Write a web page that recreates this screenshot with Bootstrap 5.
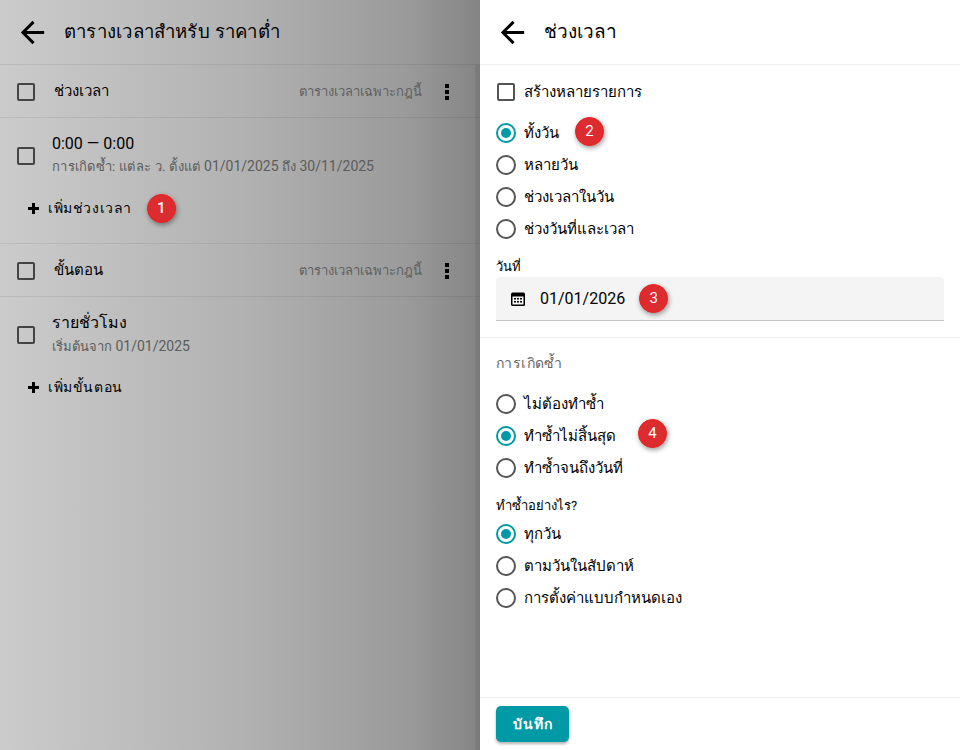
<!DOCTYPE html>
<html lang="th">
<head>
    <meta charset="UTF-8">
    <meta name="viewport" content="width=device-width, initial-scale=1.0">
    <title>ช่วงเวลา</title>
    <link href="https://cdn.jsdelivr.net/npm/bootstrap@5.3.0/dist/css/bootstrap.min.css" rel="stylesheet">
    <style>
        html, body { height: 100%; }
        body {
            font-family: Roboto, "Noto Sans", "Liberation Sans", sans-serif;
            font-size: 14px;
            color: #000;
            overflow: hidden;
        }
        .page-wrap { width: 960px; height: 750px; }

        /* left side, dimmed behind the drawer */
        .back-panel {
            width: 480px;
            background: linear-gradient(90deg, #cbcbcb 0%, #b2b2b2 50%, #9a9a9a 85%, #848484 100%);
            position: relative;
        }
        .back-panel::after {
            content: "";
            position: absolute;
            top: 65px;
            right: 0;
            bottom: 0;
            width: 5px;
            background: rgba(0, 0, 0, 0.07);
        }
        .top-bar { height: 65px; padding-left: 15px; gap: 14px; }
        .back-panel .top-bar { border-bottom: 1px solid rgba(0, 0, 0, 0.07); }
        .drawer .top-bar { border-bottom: 1px solid #eee; }
        .top-title { font-size: 19px; font-weight: 500; margin: 0; }
        .back-panel .top-title { font-size: 18.6px; letter-spacing: 0.22px; }

        .group-row { height: 53px; padding: 1px 30px 0 17px; border-bottom: 1px solid rgba(0, 0, 0, 0.07); }
        .group-name { font-size: 15px; font-weight: 500; margin-left: 19px; }
        .group-hint { font-size: 13px; color: #5f5f5f; margin-left: auto; margin-right: 22px; }
        .entry-row { padding: 15px 17px 0; gap: 17px; }
        .entry-title { font-size: 16px; line-height: 22px; }
        .entry-second .entry-title { font-weight: 500; }
        .entry-sub { font-size: 14px; line-height: 22px; color: #5c5c5c; }
        .entry-second .entry-sub { margin-top: 1px; }
        .entry-sub .th-part { font-size: 13px; }
        .entry-sub .th-wide { letter-spacing: 0.3px; }
        .add-link { font-size: 14px; font-weight: 500; letter-spacing: 0.6px; padding-left: 28px; gap: 9px; }
        .add-first { margin-top: 16px; height: 28px; }
        .add-second { margin-top: 15px; height: 28px; }
        .block-end { height: 22px; border-bottom: 1px solid rgba(0, 0, 0, 0.07); }

        .box-icon {
            width: 18px;
            height: 18px;
            border: 2px solid #444;
            border-radius: 2px;
            flex-shrink: 0;
        }
        .drawer .box-icon { border-color: #555; }
        .dot-icon {
            width: 20px;
            height: 20px;
            border: 2px solid #555;
            border-radius: 50%;
            flex-shrink: 0;
        }
        .dot-icon.picked { border-color: #009aa6; padding: 3px; }
        .dot-icon.picked::before {
            content: "";
            display: block;
            width: 10px;
            height: 10px;
            border-radius: 50%;
            background: #009aa6;
        }

        .num-pin {
            width: 29px;
            height: 29px;
            border-radius: 50%;
            background: #dc2c30;
            border: 1.5px solid #f01c1c;
            color: #fff;
            font-size: 15px;
            box-shadow: 1px 2px 5px rgba(0, 0, 0, 0.4);
        }
        .pin-near { margin-left: 6px; }
        .pin-lift { margin-bottom: 4px; }
        .pin-far { margin-left: 14px; margin-bottom: 6px; }
        .pin-date { margin-left: -1px; }

        /* drawer */
        .drawer { width: 480px; background: #fff; }
        .drawer-body { flex: 1; }
        .check-line { height: 26px; margin: 14px 0 0 17px; gap: 9px; font-size: 15px; }
        .radio-set { margin: 12px 0 0 16px; }
        .repeat-set { margin-top: 15px; }
        .radio-line { height: 32px; gap: 8px; font-size: 15px; }
        .field-label { font-size: 13px; line-height: 18px; margin: 13px 0 0 16px; }
        .date-box {
            height: 44px;
            margin: 1px 16px 0;
            padding-left: 15px;
            gap: 15px;
            background: #f4f4f4;
            border-bottom: 1px solid #c4c4c4;
            border-radius: 4px 4px 0 0;
            font-size: 16px;
        }
        .split-line { border-top: 1px solid #eee; margin-top: 16px; }
        .repeat-head { font-size: 14px; letter-spacing: 0.4px; color: #666; margin: 15px 0 0 16px; line-height: 20px; }
        .how-label { font-size: 13px; line-height: 18px; margin: 13px 0 0 16px; }
        .how-set { margin: 3px 0 0 16px; }
        .drawer-foot { height: 53px; border-top: 1px solid #eee; padding: 8px 16px 0; }
        .save-btn {
            height: 36px;
            width: 73px;
            padding: 0;
            font-size: 14px;
            font-weight: 700;
            letter-spacing: 1px;
            color: #fff;
            background: #009aa6;
            border: 0;
            border-radius: 5px;
            box-shadow: 0 2px 3px rgba(0, 0, 0, 0.3);
        }
    </style>
</head>
<body>
<div class="page-wrap d-flex">

    <div class="back-panel">
        <div class="top-bar d-flex align-items-center">
            <svg width="35" height="35" viewBox="0 0 24 24"><path d="M20 11H7.83l5.59-5.59L12 4l-8 8 8 8 1.41-1.41L7.83 13H20z"/></svg>
            <h1 class="top-title">ตารางเวลาสำหรับ ราคาต่ำ</h1>
        </div>

        <div class="group-row d-flex align-items-center">
            <span class="box-icon"></span>
            <span class="group-name">ช่วงเวลา</span>
            <span class="group-hint">ตารางเวลาเฉพาะกฎนี้</span>
            <svg width="6" height="18" viewBox="0 0 6 18"><path d="M1 1h4v4H1zM1 7h4v4H1zM1 13h4v4H1z"/></svg>
        </div>
        <div class="entry-row d-flex align-items-center">
            <span class="box-icon"></span>
            <div>
                <div class="entry-title">0:00 — 0:00</div>
                <div class="entry-sub"><span class="th-part th-wide">การเกิดซ้ำ: แต่ละ ว. ตั้งแต่</span> 01/01/2025 <span class="th-part">ถึง</span> 30/11/2025</div>
            </div>
        </div>
        <div class="add-link add-first d-flex align-items-center">
            <svg width="11" height="11" viewBox="0 0 11 11"><path d="M4 0h3v4h4v3H7v4H4V7H0V4h4z"/></svg>
            <span>เพิ่มช่วงเวลา</span>
            <span class="num-pin pin-near d-flex align-items-center justify-content-center">1</span>
        </div>
        <div class="block-end"></div>

        <div class="group-row d-flex align-items-center">
            <span class="box-icon"></span>
            <span class="group-name">ขั้นตอน</span>
            <span class="group-hint">ตารางเวลาเฉพาะกฎนี้</span>
            <svg width="6" height="18" viewBox="0 0 6 18"><path d="M1 1h4v4H1zM1 7h4v4H1zM1 13h4v4H1z"/></svg>
        </div>
        <div class="entry-row entry-second d-flex align-items-center">
            <span class="box-icon"></span>
            <div>
                <div class="entry-title">รายชั่วโมง</div>
                <div class="entry-sub"><span class="th-part">เริ่มต้นจาก</span> 01/01/2025</div>
            </div>
        </div>
        <div class="add-link add-second d-flex align-items-center">
            <svg width="11" height="11" viewBox="0 0 11 11"><path d="M4 0h3v4h4v3H7v4H4V7H0V4h4z"/></svg>
            <span>เพิ่มขั้นตอน</span>
        </div>
    </div>

    <div class="drawer d-flex flex-column">
        <div class="top-bar d-flex align-items-center">
            <svg width="35" height="35" viewBox="0 0 24 24"><path d="M20 11H7.83l5.59-5.59L12 4l-8 8 8 8 1.41-1.41L7.83 13H20z"/></svg>
            <h2 class="top-title">ช่วงเวลา</h2>
        </div>

        <div class="drawer-body">
            <div class="check-line d-flex align-items-center">
                <span class="box-icon"></span>
                <span>สร้างหลายรายการ</span>
            </div>

            <div class="radio-set">
                <div class="radio-line d-flex align-items-center">
                    <span class="dot-icon picked"></span>
                    <span>ทั้งวัน</span>
                    <span class="num-pin pin-lift d-flex align-items-center justify-content-center ms-2">2</span>
                </div>
                <div class="radio-line d-flex align-items-center"><span class="dot-icon"></span><span>หลายวัน</span></div>
                <div class="radio-line d-flex align-items-center"><span class="dot-icon"></span><span>ช่วงเวลาในวัน</span></div>
                <div class="radio-line d-flex align-items-center"><span class="dot-icon"></span><span>ช่วงวันที่และเวลา</span></div>
            </div>

            <div class="field-label">วันที่</div>
            <div class="date-box d-flex align-items-center">
                <svg width="14" height="14" viewBox="0 0 14 14"><path fill-rule="evenodd" d="M1.500 0.500h11A1.500 1.500 0 0 1 14 2v10.500a1.500 1.500 0 0 1-1.500 1.500h-11A1.500 1.500 0 0 1 0 12.500V2A1.500 1.500 0 0 1 1.500 0.500zM1.500 4.500v8h11v-8zM3 6h2v1.500H3zM6 6h2v1.500H6zM9 6h2v1.500H9zM3 9h2v1.500H3zM6 9h2v1.500H6zM9 9h2v1.500H9z"/></svg>
                <span>01/01/2026</span>
                <span class="num-pin pin-date d-flex align-items-center justify-content-center">3</span>
            </div>
            <div class="split-line"></div>

            <div class="repeat-head">การเกิดซ้ำ</div>
            <div class="radio-set repeat-set">
                <div class="radio-line d-flex align-items-center"><span class="dot-icon"></span><span>ไม่ต้องทำซ้ำ</span></div>
                <div class="radio-line d-flex align-items-center">
                    <span class="dot-icon picked"></span>
                    <span>ทำซ้ำไม่สิ้นสุด</span>
                    <span class="num-pin pin-far d-flex align-items-center justify-content-center">4</span>
                </div>
                <div class="radio-line d-flex align-items-center"><span class="dot-icon"></span><span>ทำซ้ำจนถึงวันที่</span></div>
            </div>

            <div class="how-label">ทำซ้ำอย่างไร?</div>
            <div class="how-set">
                <div class="radio-line d-flex align-items-center"><span class="dot-icon picked"></span><span>ทุกวัน</span></div>
                <div class="radio-line d-flex align-items-center"><span class="dot-icon"></span><span>ตามวันในสัปดาห์</span></div>
                <div class="radio-line d-flex align-items-center"><span class="dot-icon"></span><span>การตั้งค่าแบบกำหนดเอง</span></div>
            </div>
        </div>

        <div class="drawer-foot">
            <button type="button" class="btn save-btn">บันทึก</button>
        </div>
    </div>
</div>
<script src="https://cdn.jsdelivr.net/npm/bootstrap@5.3.0/dist/js/bootstrap.bundle.min.js"></script>
</body>
</html>
